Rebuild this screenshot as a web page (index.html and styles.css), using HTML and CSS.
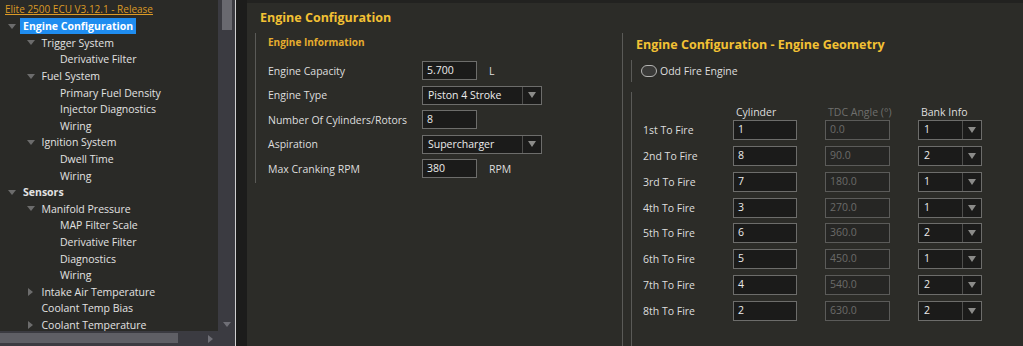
FILE: index.html
```html
<!DOCTYPE html>
<html>
<head>
	<meta charset="utf-8">
	<title>Engine Configuration</title>
	<link rel="stylesheet" href="styles.css">
</head>
<body>
<div class="app">
	<div class="nav">
		<div class="nav-body">
			<div class="tree">
				<div class="tree-root"><a href="#">Elite 2500 ECU V3.12.1 - Release</a></div>
				<div class="node lv0"><span class="twisty open"></span><span class="label selected">Engine Configuration</span></div>
				<div class="node lv1"><span class="twisty open"></span><span class="label">Trigger System</span></div>
				<div class="node lv2"><span class="twisty"></span><span class="label">Derivative Filter</span></div>
				<div class="node lv1"><span class="twisty open"></span><span class="label">Fuel System</span></div>
				<div class="node lv2"><span class="twisty"></span><span class="label">Primary Fuel Density</span></div>
				<div class="node lv2"><span class="twisty"></span><span class="label">Injector Diagnostics</span></div>
				<div class="node lv2"><span class="twisty"></span><span class="label">Wiring</span></div>
				<div class="node lv1"><span class="twisty open"></span><span class="label">Ignition System</span></div>
				<div class="node lv2"><span class="twisty"></span><span class="label">Dwell Time</span></div>
				<div class="node lv2"><span class="twisty"></span><span class="label">Wiring</span></div>
				<div class="node lv0"><span class="twisty open"></span><span class="label strong">Sensors</span></div>
				<div class="node lv1"><span class="twisty open"></span><span class="label">Manifold Pressure</span></div>
				<div class="node lv2"><span class="twisty"></span><span class="label">MAP Filter Scale</span></div>
				<div class="node lv2"><span class="twisty"></span><span class="label">Derivative Filter</span></div>
				<div class="node lv2"><span class="twisty"></span><span class="label">Diagnostics</span></div>
				<div class="node lv2"><span class="twisty"></span><span class="label">Wiring</span></div>
				<div class="node lv1"><span class="twisty closed"></span><span class="label">Intake Air Temperature</span></div>
				<div class="node lv1"><span class="twisty"></span><span class="label">Coolant Temp Bias</span></div>
				<div class="node lv1"><span class="twisty closed"></span><span class="label">Coolant Temperature</span></div>
			</div>
			<div class="vscroll">
				<div class="vthumb"></div>
				<div class="arrow-down"></div>
			</div>
		</div>
		<div class="hscroll">
			<div class="hthumb"></div>
			<div class="arrow-right"></div>
		</div>
	</div>

	<div class="splitter"></div>

	<div class="main">
		<div class="tabs-edge"></div>
		<h1 class="page-title">Engine Configuration</h1>

		<div class="panels">
			<div class="group info">
				<h2>Engine Information</h2>
				<div class="form">
					<label>Engine Capacity</label>
					<div class="field">5.700</div>
					<span class="unit">L</span>

					<label>Engine Type</label>
					<div class="combo wide">Piston 4 Stroke<span class="drop"></span></div>

					<label>Number Of Cylinders/Rotors</label>
					<div class="field">8</div>
					<span></span>

					<label>Aspiration</label>
					<div class="combo wide">Supercharger<span class="drop"></span></div>

					<label>Max Cranking RPM</label>
					<div class="field">380</div>
					<span class="unit">RPM</span>
				</div>
			</div>

			<div class="group geometry">
				<h1 class="geo-title">Engine Configuration - Engine Geometry</h1>

				<div class="subgroup odd-fire">
					<span class="toggle"></span>
					<span>Odd Fire Engine</span>
				</div>

				<div class="subgroup firing">
					<div class="fire-head">
						<span></span>
						<span>Cylinder</span>
						<span class="disabled">TDC Angle (&deg;)</span>
						<span>Bank Info</span>
					</div>
					<div class="fire-grid">
						<label>1st To Fire</label>
						<div class="field">1</div>
						<div class="field off">0.0</div>
						<div class="combo">1<span class="drop"></span></div>

						<label>2nd To Fire</label>
						<div class="field">8</div>
						<div class="field off">90.0</div>
						<div class="combo">2<span class="drop"></span></div>

						<label>3rd To Fire</label>
						<div class="field">7</div>
						<div class="field off">180.0</div>
						<div class="combo">1<span class="drop"></span></div>

						<label>4th To Fire</label>
						<div class="field">3</div>
						<div class="field off">270.0</div>
						<div class="combo">1<span class="drop"></span></div>

						<label>5th To Fire</label>
						<div class="field">6</div>
						<div class="field off">360.0</div>
						<div class="combo">2<span class="drop"></span></div>

						<label>6th To Fire</label>
						<div class="field">5</div>
						<div class="field off">450.0</div>
						<div class="combo">1<span class="drop"></span></div>

						<label>7th To Fire</label>
						<div class="field">4</div>
						<div class="field off">540.0</div>
						<div class="combo">2<span class="drop"></span></div>

						<label>8th To Fire</label>
						<div class="field">2</div>
						<div class="field off">630.0</div>
						<div class="combo">2<span class="drop"></span></div>
					</div>
				</div>
			</div>
		</div>
	</div>
</div>
</body>
</html>
```

FILE: styles.css
```css
* {
	box-sizing: border-box;
}

body {
	margin: 0;
	background-color: #2c2c28;
	color: #dedede;
	font-family: "Open Sans", "Noto Sans", sans-serif;
	font-size: 10.5px;
}

.app {
	display: flex;
	width: 1023px;
	height: 346px;
	overflow: hidden;
}

/* navigation tree */

.nav {
	display: flex;
	flex-direction: column;
	width: 235px;
	background-color: #3b3b41;
}

.nav-body {
	display: flex;
	flex: 1;
	min-height: 0;
}

.tree {
	width: 218px;
	background-color: #2a2a27;
	overflow: hidden;
	white-space: nowrap;
}

.tree-root {
	height: 18px;
	line-height: 19px;
	padding-left: 5px;
}

.tree-root a {
	color: #dc9a26;
	font-size: 10px;
}

.node {
	display: flex;
	align-items: center;
	height: 16.6px;
}

.node.lv0 {
	padding-left: 4px;
}

.node.lv1 {
	padding-left: 22.5px;
}

.node.lv2 {
	padding-left: 41px;
}

.twisty {
	display: flex;
	justify-content: center;
	align-items: center;
	width: 16px;
	height: 16px;
}

.twisty.open::before {
	content: "";
	border-left: 4.5px solid transparent;
	border-right: 4.5px solid transparent;
	border-top: 5px solid #6c6c6c;
}

.twisty.closed::before {
	content: "";
	border-top: 4px solid transparent;
	border-bottom: 4px solid transparent;
	border-left: 5px solid #6c6c6c;
}

.label {
	padding: 0 3px;
	line-height: 16px;
	font-size: 10.5px;
	color: #e2e2e2;
}

.label.selected {
	background-color: #1f8df0;
	color: #fff;
	font-weight: bold;
}

.label.strong {
	font-weight: bold;
}

.vscroll {
	position: relative;
	width: 17px;
}

.vthumb {
	margin-left: 4px;
	width: 10px;
	height: 30px;
	background-color: #69696f;
}

.arrow-down {
	position: absolute;
	left: 5px;
	bottom: 4px;
	border-left: 4px solid transparent;
	border-right: 4px solid transparent;
	border-top: 5px solid #6f6f76;
}

.hscroll {
	position: relative;
	height: 15px;
	padding-top: 2px;
}

.hthumb {
	width: 178px;
	height: 10px;
	background-color: #5f5f65;
}

.arrow-right {
	position: absolute;
	left: 208px;
	top: 4px;
	border-top: 4px solid transparent;
	border-bottom: 4px solid transparent;
	border-left: 5px solid #6f6f76;
}

.splitter {
	width: 12px;
	border-left: 1px solid #cfcfcf;
	background-color: #1c1c1b;
}

/* main page */

.main {
	display: flex;
	flex-direction: column;
	flex: 1;
}

.tabs-edge {
	height: 3px;
	background-color: #222220;
}

.page-title,
.geo-title {
	margin: 0;
	color: #f3c134;
	font-size: 12.5px;
	font-weight: bold;
	line-height: 18px;
}

.page-title {
	margin: 6px 0 6px 13px;
}

.panels {
	display: flex;
	flex: 1;
}

.group {
	border-left: solid 1px #5a5a57;
}

.info {
	align-self: flex-start;
	width: 367px;
	height: 150px;
	margin-left: 8px;
	padding: 2px 0 0 12px;
}

.info h2 {
	margin: 0 0 12px;
	color: #e6ac2e;
	font-size: 10px;
	font-weight: bold;
	line-height: 14px;
}

.form {
	display: grid;
	grid-template-columns: 154px 55px 66px;
	grid-auto-rows: 19px;
	row-gap: 5.5px;
	align-items: center;
}

.unit {
	padding-left: 12px;
}

.field,
.combo {
	height: 100%;
	padding-left: 4px;
	border: solid 1px #6d6d6b;
	background-color: #1b1b1a;
	color: #ececec;
	line-height: 17px;
}

.field.off {
	border-color: #5b5b59;
	background-color: #262624;
	color: #6b6b69;
}

.combo {
	display: flex;
	justify-content: space-between;
	padding-left: 5px;
}

.combo.wide {
	grid-column: span 2;
	width: 120px;
}

.drop {
	display: flex;
	justify-content: center;
	align-items: center;
	width: 19px;
	border-left: solid 1px #4e4e4c;
}

.drop::before {
	content: "";
	border-left: 4.5px solid transparent;
	border-right: 4.5px solid transparent;
	border-top: 6px solid #8b8b89;
}

/* engine geometry */

.geometry {
	display: flex;
	flex-direction: column;
	flex: 1;
	padding: 3px 0 0 8px;
}

.geo-title {
	padding-left: 5px;
}

.subgroup {
	border-left: solid 1px #5a5a57;
}

.odd-fire {
	display: flex;
	align-items: center;
	gap: 3px;
	height: 22px;
	margin-top: 6px;
	padding-left: 9px;
}

.toggle {
	width: 16px;
	height: 12px;
	border: solid 1px #b4b4b2;
	border-radius: 6px;
	background-color: #3a3a38;
}

.firing {
	flex: 1;
	margin-top: 10px;
	padding: 12px 0 0 11px;
}

.fire-head,
.fire-grid {
	display: grid;
	grid-template-columns: 62px 64px 65px 64px;
	column-gap: 28px;
}

.fire-head {
	height: 16px;
	line-height: 16px;
	white-space: nowrap;
}

.fire-head span {
	padding-left: 3px;
}

.fire-head .disabled {
	color: #6f6f6d;
}

.fire-grid {
	grid-auto-rows: 20px;
	row-gap: 5.85px;
	align-items: center;
	white-space: nowrap;
}
```
